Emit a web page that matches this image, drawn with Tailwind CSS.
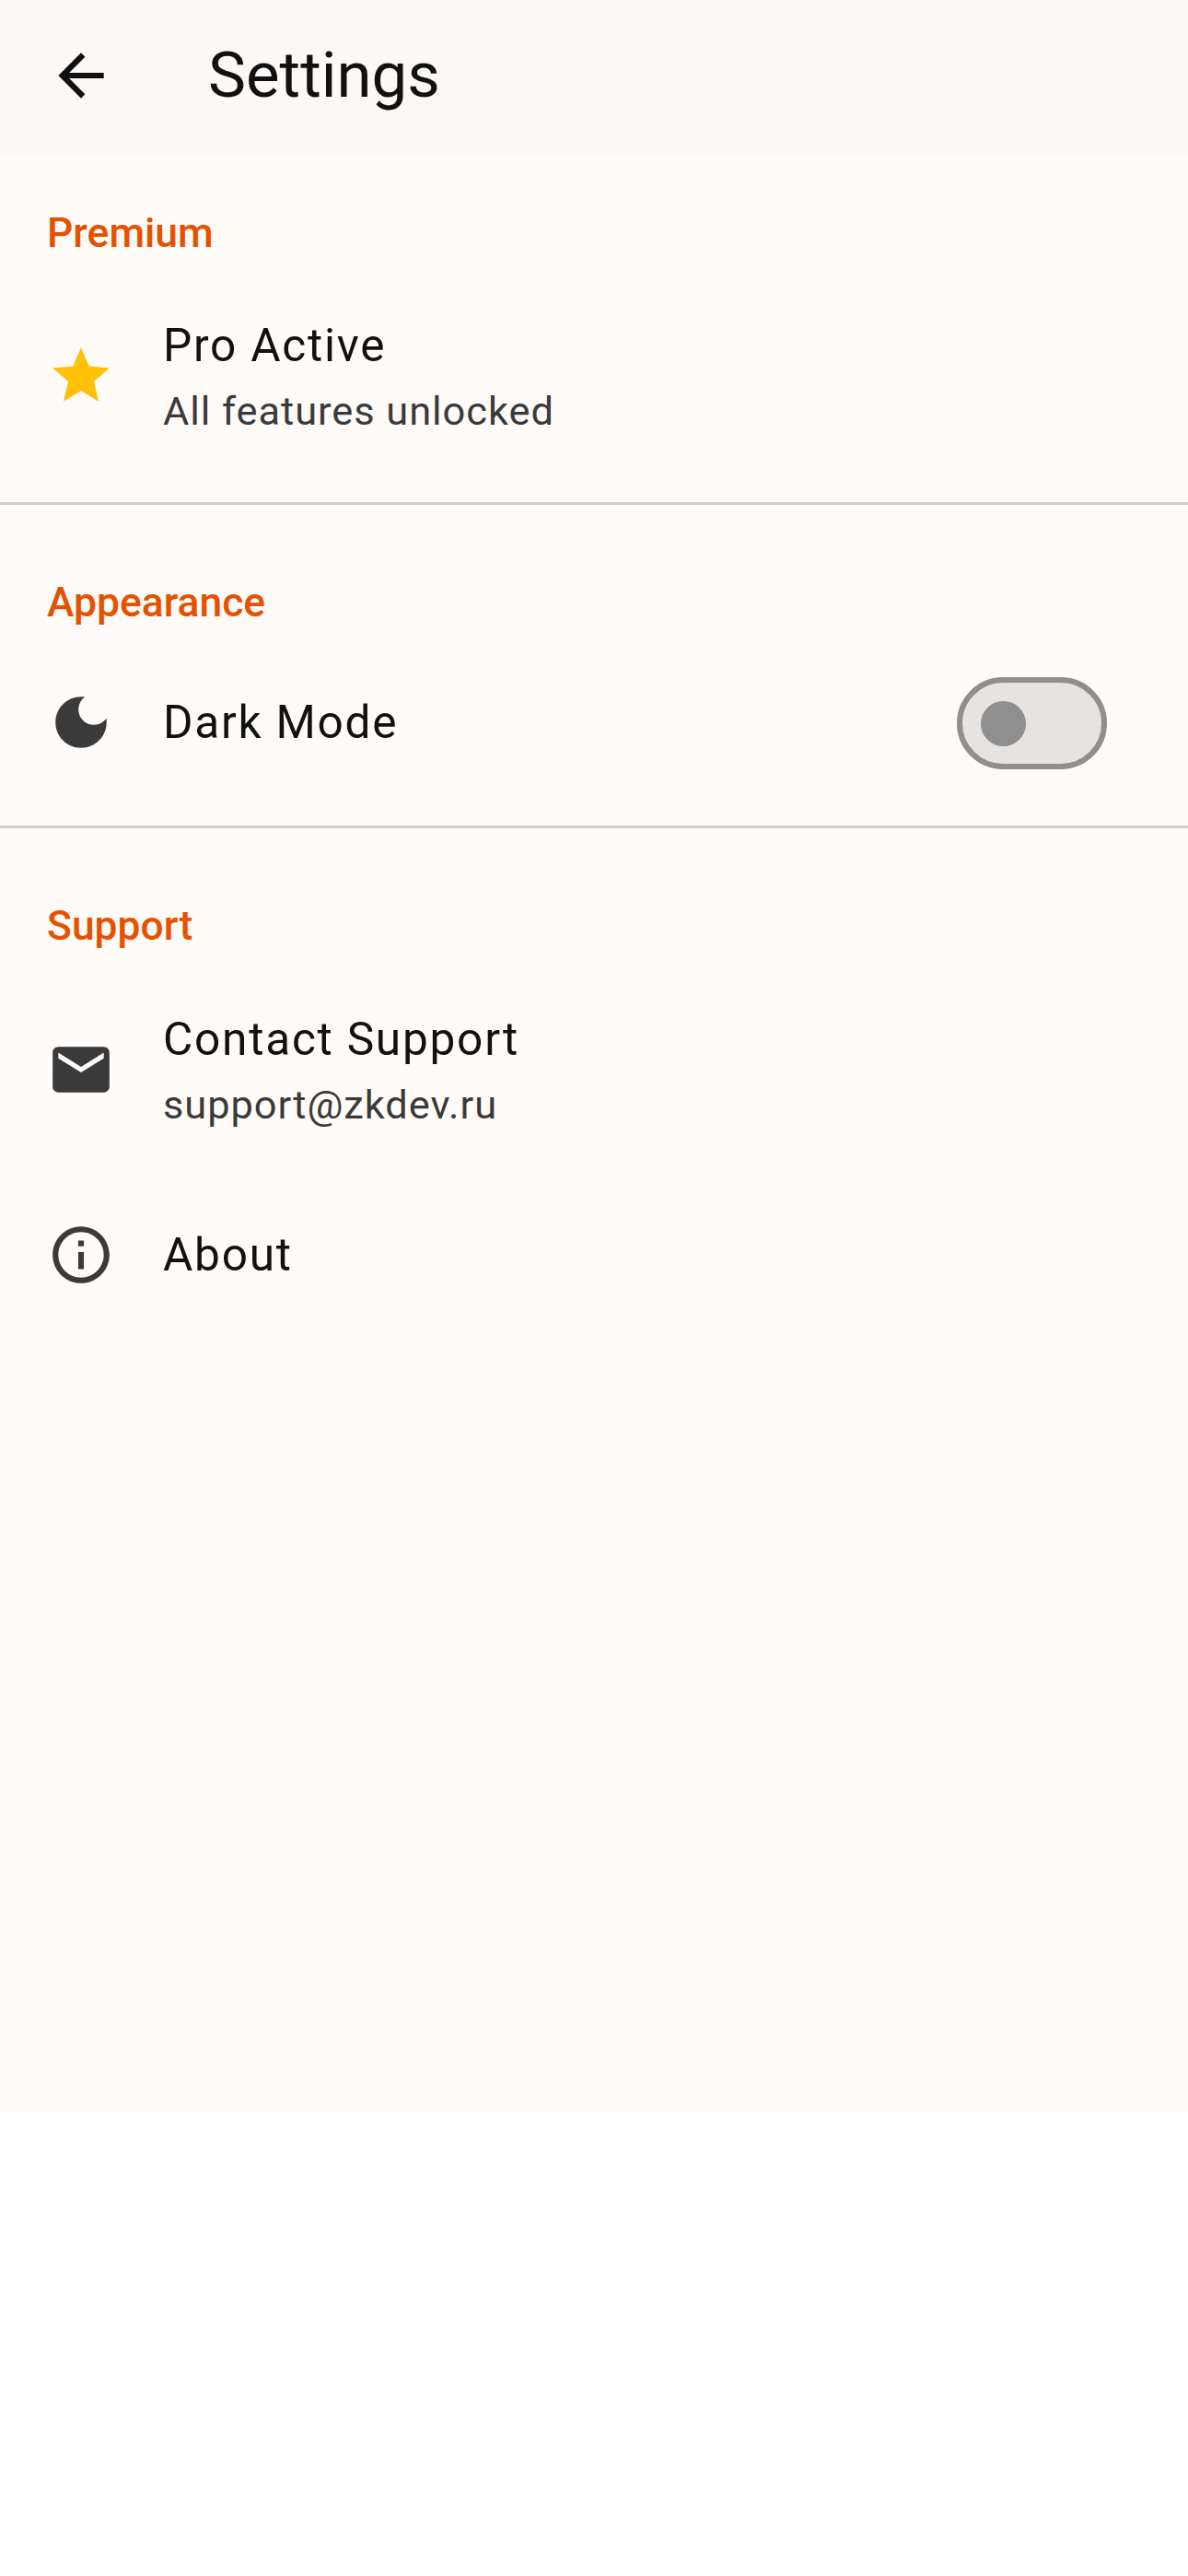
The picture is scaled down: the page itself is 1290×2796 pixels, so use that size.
<!DOCTYPE html>
<html lang="en">

<head>
  <meta charset="UTF-8">
  <title>Settings</title>
  <script src="https://cdn.jsdelivr.net/npm/@tailwindcss/browser@4"></script>
</head>

<body class="bg-white font-['Roboto',sans-serif]">

  <div class="w-[1290px] h-[2293px] bg-[#FFFBF8] flex flex-col">

    <!-- App bar -->
    <div class="h-[171px] bg-[#FBF8F5] flex items-center pl-[51px] pb-[7px] shrink-0">
      <svg class="w-[74px] h-[74px] fill-[#111111] shrink-0" viewBox="0 0 24 24"><path d="M20 11H7.83l5.59-5.59L12 4l-8 8 8 8 1.41-1.41L7.83 13H20v-2z"/></svg>
      <h1 class="ml-[101px] text-[69px] leading-[80px] text-[#111111]">Settings</h1>
    </div>

    <!-- Premium -->
    <div class="mt-[57px] h-[50px] pl-[51px] text-[44.4px] leading-[50px] font-medium text-[#E65100]">Premium</div>
    <div class="mt-[22px] h-[216px] pl-[51px] flex items-center">
      <svg class="w-[74px] h-[74px] fill-[#FFC107] shrink-0" viewBox="0 0 24 24"><path d="M12 17.27L18.18 21l-1.64-7.03L22 9.24l-7.19-.61L12 2 9.19 8.63 2 9.24l5.46 4.73L5.82 21z"/></svg>
      <div class="ml-[52px] pt-[6px]">
        <div class="text-[49.6px] leading-[72px] tracking-[1.75px] text-[#111111]">Pro Active</div>
        <div class="text-[43.4px] leading-[72px] tracking-[0.95px] text-[#3A3A3A]">All features unlocked</div>
      </div>
    </div>
    <div class="mt-[29px] h-[3px] bg-[#D0CECC]"></div>

    <!-- Appearance -->
    <div class="mt-[81px] h-[50px] pl-[51px] text-[44.4px] leading-[50px] font-medium text-[#E65100]">Appearance</div>
    <div class="mt-[21px] h-[168px] pl-[51px] pr-[88px] flex items-center">
      <svg class="w-[74px] h-[74px] fill-[#3A3A3A] shrink-0" viewBox="0 0 24 24"><path d="M12 3c-4.97 0-9 4.03-9 9s4.03 9 9 9 9-4.03 9-9c0-.46-.04-.92-.1-1.36-.98 1.37-2.58 2.26-4.4 2.26-2.98 0-5.4-2.42-5.4-5.4 0-1.81.89-3.42 2.26-4.4-.44-.06-.9-.1-1.36-.1z"/></svg>
      <div class="ml-[52px] text-[49.6px] leading-[72px] tracking-[1.75px] text-[#111111]">Dark Mode</div>
      <div class="ml-auto mt-[2px] w-[163px] h-[100px] rounded-full border-[6px] border-[#8F8F8F] bg-[#E6E3E0] flex items-center pl-[20px]">
        <div class="w-[49px] h-[49px] rounded-full bg-[#8F8F8F]"></div>
      </div>
    </div>
    <div class="mt-[28px] h-[3px] bg-[#D0CECC]"></div>

    <!-- Support -->
    <div class="mt-[81px] h-[50px] pl-[51px] text-[44.4px] leading-[50px] font-medium text-[#E65100]">Support</div>
    <div class="mt-[23px] h-[216px] pl-[51px] flex items-center">
      <svg class="w-[74px] h-[74px] fill-[#3A3A3A] shrink-0" viewBox="0 0 24 24"><path d="M20 4H4c-1.1 0-1.99.9-1.99 2L2 18c0 1.1.9 2 2 2h16c1.1 0 2-.9 2-2V6c0-1.1-.9-2-2-2zm0 4l-8 5-8-5V6l8 5 8-5v2z"/></svg>
      <div class="ml-[52px] pt-[6px]">
        <div class="text-[49.6px] leading-[72px] tracking-[1.75px] text-[#111111]">Contact Support</div>
        <div class="text-[43.4px] leading-[72px] tracking-[0.95px] text-[#3A3A3A]">support@zkdev.ru</div>
      </div>
    </div>
    <div class="mt-[9px] h-[168px] pl-[51px] flex items-center">
      <svg class="w-[74px] h-[74px] fill-[#3A3A3A] shrink-0" viewBox="0 0 24 24"><path d="M11 7h2v2h-2zm0 4h2v6h-2zm1-9C6.48 2 2 6.48 2 12s4.48 10 10 10 10-4.48 10-10S17.52 2 12 2zm0 18c-4.41 0-8-3.59-8-8s3.59-8 8-8 8 3.59 8 8-3.59 8-8 8z"/></svg>
      <div class="ml-[52px] text-[49.6px] leading-[72px] tracking-[1.75px] text-[#111111]">About</div>
    </div>

  </div>

</body>

</html>
